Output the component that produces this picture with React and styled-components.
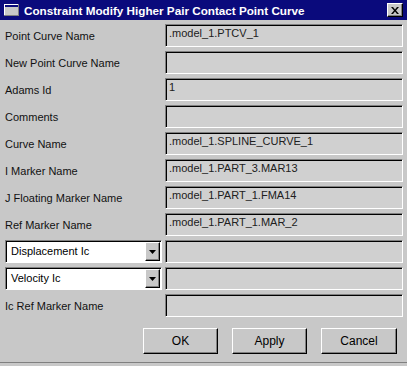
import React from 'react';
import styled, { createGlobalStyle } from 'styled-components';

const GlobalStyle = createGlobalStyle`
  html, body {
    margin: 0;
    padding: 0;
    background: #c8c8c8;
  }
  body {
    font-family: "Liberation Sans", Arial, sans-serif;
    font-size: 11px;
    color: #000;
  }
`;

const Window = styled.div`
  width: 407px;
  height: 363px;
  box-sizing: border-box;
  background: #c8c8c8;
  display: flex;
  flex-direction: column;
  border-bottom: 1px solid #808080;
  overflow: hidden;
`;

const TitleBar = styled.div`
  height: 20px;
  flex: none;
  background: #0a0a7c;
  display: flex;
  align-items: center;
  padding: 0 4px 0 4px;
`;

const TitleText = styled.span`
  margin-left: 5px;
  color: #fff;
  font-weight: bold;
  font-size: 11.7px;
  white-space: nowrap;
  padding-top: 1px;
`;

const CloseButton = styled.div`
  margin-left: auto;
  width: 16px;
  height: 14px;
  box-sizing: border-box;
  background: #c8c8c8;
  border: 1px solid;
  border-color: #fff #000 #000 #fff;
  box-shadow: inset -1px -1px 0 #808080;
  display: flex;
  align-items: center;
  justify-content: center;
`;

const Form = styled.div`
  display: grid;
  grid-template-columns: 157px 238px;
  grid-auto-rows: 23px;
  column-gap: 3px;
  row-gap: 4px;
  padding: 4px 4px 0 5px;
`;

const Label = styled.div`
  padding-top: 6px;
  line-height: 13px;
  white-space: nowrap;
  color: #111;
`;

const Field = styled.div`
  box-sizing: border-box;
  background: #d0d0d0;
  border: 1px solid;
  border-color: #808080 #fff #fff #808080;
  box-shadow: inset 1px 1px 0 #000;
  padding: 2px 0 0 3px;
  line-height: 13px;
  color: #202020;
  white-space: nowrap;
`;

const Combo = styled.div`
  box-sizing: border-box;
  background: #fff;
  border: 1px solid;
  border-color: #808080 #fff #fff #808080;
  box-shadow: inset 1px 1px 0 #000;
  padding: 1px;
  display: flex;
  align-items: stretch;
`;

const ComboText = styled.span`
  flex: 1;
  padding-left: 4px;
  display: flex;
  align-items: center;
  line-height: 13px;
`;

const ArrowButton = styled.div`
  width: 15px;
  box-sizing: border-box;
  background: #c8c8c8;
  border: 1px solid;
  border-color: #fff #000 #000 #fff;
  box-shadow: inset -1px -1px 0 #808080;
  display: flex;
  align-items: center;
  justify-content: center;
`;

const ButtonRow = styled.div`
  display: flex;
  justify-content: flex-end;
  gap: 14px;
  padding-right: 10px;
  margin-top: 11px;
`;

const Button = styled.div`
  width: ${p => p.$w || 75}px;
  height: 26px;
  box-sizing: border-box;
  background: #c8c8c8;
  border: 1px solid;
  border-color: #fff #000 #000 #fff;
  box-shadow: inset -1px -1px 0 #808080;
  display: flex;
  align-items: center;
  justify-content: center;
  font-size: 12px;
`;

const WindowIcon = () => (
  <svg width="15" height="12" viewBox="0 0 15 12">
    <rect x="0.5" y="0.5" width="14" height="11" fill="#c8c8c8" stroke="#fff" />
    <rect x="1" y="1" width="13" height="2" fill="#0a0a7c" />
    <line x1="14.5" y1="0" x2="14.5" y2="12" stroke="#808080" />
    <line x1="0" y1="11.5" x2="15" y2="11.5" stroke="#808080" />
  </svg>
);

const CloseIcon = () => (
  <svg width="8" height="7" viewBox="0 0 8 7">
    <path d="M0 0 L2 0 L4 2.5 L6 0 L8 0 L5 3.5 L8 7 L6 7 L4 4.5 L2 7 L0 7 L3 3.5 Z" fill="#000" />
  </svg>
);

const DownArrow = () => (
  <svg width="7" height="4" viewBox="0 0 7 4">
    <path d="M0 0 H7 L3.5 4 Z" fill="#000" />
  </svg>
);

const rows = [
  { label: 'Point Curve Name', value: '.model_1.PTCV_1' },
  { label: 'New Point Curve Name', value: '' },
  { label: 'Adams Id', value: '1' },
  { label: 'Comments', value: '' },
  { label: 'Curve Name', value: '.model_1.SPLINE_CURVE_1' },
  { label: 'I Marker Name', value: '.model_1.PART_3.MAR13' },
  { label: 'J Floating Marker Name', value: '.model_1.PART_1.FMA14' },
  { label: 'Ref Marker Name', value: '.model_1.PART_1.MAR_2' },
  { combo: 'Displacement Ic', value: '' },
  { combo: 'Velocity Ic', value: '' },
  { label: 'Ic Ref Marker Name', value: '' },
];

export default function App() {
  return (
    <>
      <GlobalStyle />
      <Window>
        <TitleBar>
          <WindowIcon />
          <TitleText>Constraint Modify Higher Pair Contact Point Curve</TitleText>
          <CloseButton>
            <CloseIcon />
          </CloseButton>
        </TitleBar>
        <Form>
          {rows.map((r, i) => (
            <React.Fragment key={i}>
              {r.combo ? (
                <Combo>
                  <ComboText>{r.combo}</ComboText>
                  <ArrowButton>
                    <DownArrow />
                  </ArrowButton>
                </Combo>
              ) : (
                <Label>{r.label}</Label>
              )}
              <Field>{r.value}</Field>
            </React.Fragment>
          ))}
        </Form>
        <ButtonRow>
          <Button>OK</Button>
          <Button>Apply</Button>
          <Button $w={76}>Cancel</Button>
        </ButtonRow>
      </Window>
    </>
  );
}
